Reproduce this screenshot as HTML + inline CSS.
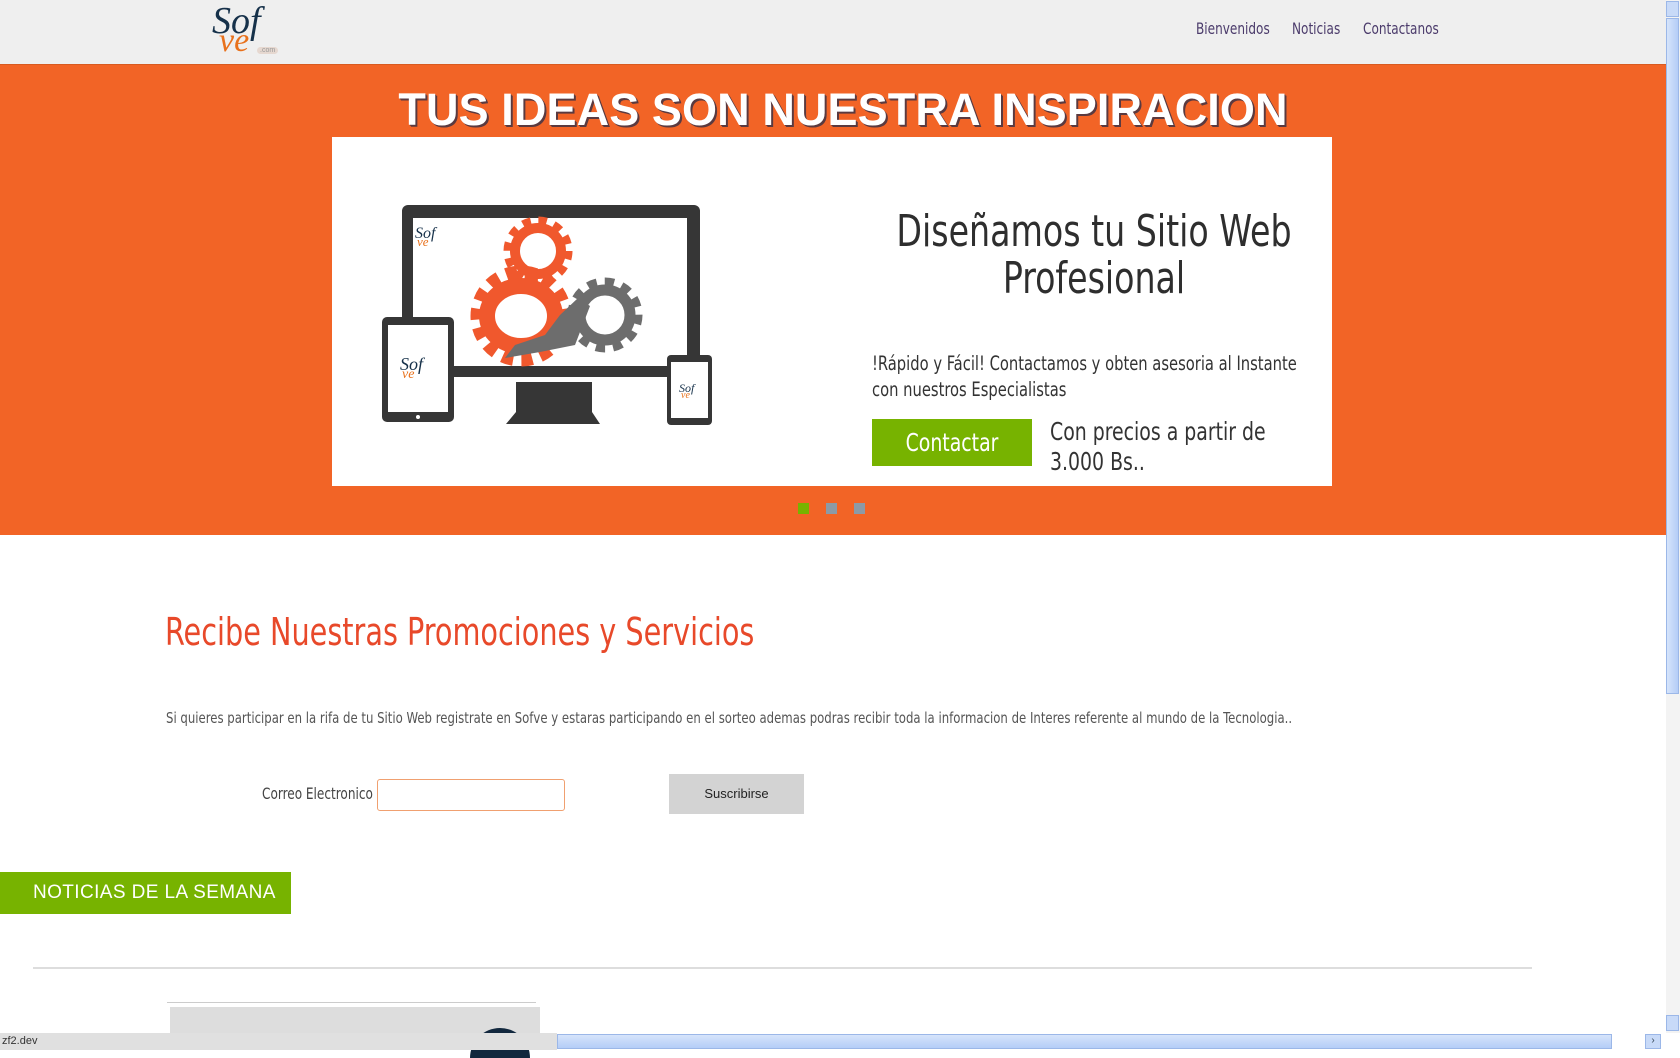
<!DOCTYPE html>
<html><head><meta charset="utf-8">
<style>
*{margin:0;padding:0;box-sizing:border-box}
body{width:1680px;height:1050px;overflow:hidden;background:#fff;position:relative;font-family:"Liberation Sans",sans-serif}
.abs{position:absolute}
.n{font-family:"DejaVu Sans Condensed","DejaVu Sans",sans-serif;white-space:nowrap;transform:scaleX(0.84);transform-origin:left top}
.c{transform-origin:center top;text-align:center}
</style></head><body>
<div class="abs" style="left:0;top:0;width:1666px;height:64px;background:#efefef"></div>
<div class="abs" style="left:212px;top:2px;font-family:'Liberation Serif',serif;font-style:italic;color:#16314a;font-size:38px;line-height:38px">Sof</div>
<div class="abs" style="left:219px;top:24px;font-family:'Liberation Serif',serif;font-style:italic;color:#e8711c;font-size:34px;line-height:34px">ve</div>
<div class="abs" style="left:257px;top:47px;font-size:7px;color:#999;background:#e6d8d0;border-radius:4px;padding:0 3px">.com</div>
<div class="abs n" style="left:1196px;top:19px;font-size:16px;color:#4b3b6b">Bienvenidos</div>
<div class="abs n" style="left:1292px;top:19px;font-size:16px;color:#4b3b6b">Noticias</div>
<div class="abs n" style="left:1363px;top:19px;font-size:16px;color:#4b3b6b">Contactanos</div>

<div class="abs" style="left:0;top:64px;width:1666px;height:471px;background:#f26426;border-top:1px solid #d85a20"></div>
<div class="abs" style="left:340px;top:84px;width:1006px;text-align:center;font-weight:bold;font-size:45px;letter-spacing:0.1px;color:#fff;text-shadow:2px 2px 0 #5a3a40,1px 1px 0 #5a3a40">TUS IDEAS SON NUESTRA INSPIRACION</div>
<div class="abs" style="left:332px;top:137px;width:1000px;height:349px;background:#fff"></div>

<svg class="abs" style="left:370px;top:195px" width="350" height="240" viewBox="370 195 350 240">
 <rect x="402" y="205" width="298" height="172" rx="6" fill="#363636"/>
 <rect x="413" y="218" width="274" height="148" fill="#fff"/>
 <path d="M516 382 L592 382 L592 412 L600 424 L506 424 L516 412Z" fill="#363636"/>
 <g>
  <circle cx="538" cy="251" r="29" fill="none" stroke="#f0582d" stroke-width="11" stroke-dasharray="8 7.2"/>
  <circle cx="538" cy="251" r="23" fill="none" stroke="#f0582d" stroke-width="10"/>
  <circle cx="605" cy="315" r="32" fill="none" stroke="#6d6d6d" stroke-width="11" stroke-dasharray="9 7.7"/>
  <circle cx="605" cy="315" r="25" fill="none" stroke="#6d6d6d" stroke-width="11"/>
  <circle cx="521" cy="316" r="44" fill="none" stroke="#f0582d" stroke-width="13" stroke-dasharray="11 8.2"/>
  <ellipse cx="521" cy="316" rx="34" ry="30" fill="none" stroke="#f0582d" stroke-width="16"/>
  <path d="M578 298 L590 306 L575 345 L540 352 L505 358 L515 345 L545 335 L560 315Z" fill="#6d6d6d"/>
 </g>
 <text x="415" y="238" font-family="Liberation Serif" font-style="italic" font-size="16" fill="#16314a">Sof</text>
 <text x="417" y="246" font-family="Liberation Serif" font-style="italic" font-size="13" fill="#e8711c">ve</text>
 <rect x="382" y="317" width="72" height="105" rx="5" fill="#363636"/>
 <rect x="388" y="325" width="60" height="87" fill="#fff"/>
 <circle cx="418" cy="417" r="2" fill="#fff"/>
 <text x="400" y="370" font-family="Liberation Serif" font-style="italic" font-size="18" fill="#16314a">Sof</text>
 <text x="402" y="378" font-family="Liberation Serif" font-style="italic" font-size="14" fill="#e8711c">ve</text>
 <rect x="667" y="355" width="45" height="70" rx="4" fill="#363636"/>
 <rect x="671" y="362" width="37" height="56" fill="#fff"/>
 <text x="679" y="392" font-family="Liberation Serif" font-style="italic" font-size="12" fill="#16314a">Sof</text>
 <text x="681" y="398" font-family="Liberation Serif" font-style="italic" font-size="10" fill="#e8711c">ve</text>
</svg>

<div class="abs n c" style="left:844px;top:208px;width:500px;font-size:44px;line-height:47px;color:#2e2e2e">Diseñamos tu Sitio Web<br>Profesional</div>
<div class="abs n" style="left:872px;top:351px;font-size:19.5px;line-height:26px;color:#333">!Rápido y Fácil! Contactamos y obten asesoria al Instante<br>con nuestros Especialistas</div>
<div class="abs" style="left:872px;top:419px;width:160px;height:47px;background:#77b300"></div>
<div class="abs n c" style="left:852px;top:427px;width:200px;font-size:25px;line-height:32px;color:#fff">Contactar</div>
<div class="abs n" style="left:1050px;top:417px;font-size:25px;line-height:30px;color:#333">Con precios a partir de<br>3.000 Bs..</div>
<div class="abs" style="left:798px;top:503px;width:11px;height:11px;background:#77b300"></div>
<div class="abs" style="left:826px;top:503px;width:11px;height:11px;background:#8c9aa6"></div>
<div class="abs" style="left:854px;top:503px;width:11px;height:11px;background:#8c9aa6"></div>

<div class="abs n" style="left:165px;top:610px;font-size:38px;color:#e8492a">Recibe Nuestras Promociones y Servicios</div>
<div class="abs n" style="left:166px;top:709px;font-size:15.5px;color:#555">Si quieres participar en la rifa de tu Sitio Web registrate en Sofve y estaras participando en el sorteo ademas podras recibir toda la informacion de Interes referente al mundo de la Tecnologia..</div>
<div class="abs n" style="left:262px;top:784px;font-size:16px;color:#444">Correo Electronico</div>
<div class="abs" style="left:377px;top:779px;width:188px;height:32px;border:1px solid #f0a070;border-radius:3px;background:#fff"></div>
<div class="abs" style="left:669px;top:774px;width:135px;height:40px;background:#d3d3d3;font-size:13px;line-height:40px;text-align:center;color:#222">Suscribirse</div>
<div class="abs" style="left:0;top:872px;width:291px;height:42px;background:#77b300;color:#fff;font-size:19px;letter-spacing:0.4px;line-height:42px;padding-left:33px">NOTICIAS DE LA SEMANA</div>
<div class="abs" style="left:33px;top:967px;width:1499px;height:2px;background:#ddd"></div>
<div class="abs" style="left:167px;top:1002px;width:369px;height:1px;background:#ccc"></div>
<div class="abs" style="left:170px;top:1007px;width:370px;height:43px;background:#ddd"></div>
<div class="abs" style="left:470px;top:1028px;width:60px;height:30px;border-radius:30px 30px 0 0;background:#12283e"></div>

<div class="abs" style="left:0;top:1033px;width:557px;height:17px;background:#e0e0e0;font-size:11px;line-height:17px;padding-left:2px;color:#333">zf2.dev</div>
<div class="abs" style="left:557px;top:1034px;width:1055px;height:15px;background:linear-gradient(#d6e4fb,#b4cdf7);border:1px solid #9bb7e8"></div>
<div class="abs" style="left:1645px;top:1034px;width:16px;height:15px;background:#c8daf8;border:1px solid #9bb7e8;font-size:10px;text-align:center;color:#345">›</div>
<div class="abs" style="left:1666px;top:0;width:14px;height:1033px;background:#f3f3f3"></div>
<div class="abs" style="left:1666px;top:18px;width:13px;height:676px;background:linear-gradient(90deg,#d6e4fb,#b4cdf7);border:1px solid #9bb7e8"></div>
<div class="abs" style="left:1666px;top:1px;width:13px;height:16px;background:#c8daf8;border:1px solid #9bb7e8"></div>
<div class="abs" style="left:1666px;top:1015px;width:13px;height:16px;background:#c8daf8;border:1px solid #9bb7e8"></div>
</body></html>
